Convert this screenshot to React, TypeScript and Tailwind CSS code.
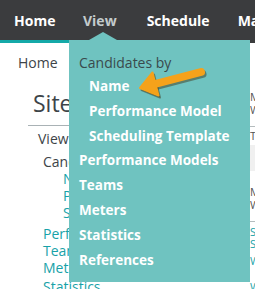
import React from "react";

const App = () => {
  return (
    <div className="relative w-[255px] h-[289px] overflow-hidden bg-white font-['Open_Sans',sans-serif]">
      {/* top nav */}
      <div className="h-[43px] bg-[#3b3c3e] flex items-start text-[14px] font-bold whitespace-nowrap">
        <div className="w-[69px] shrink-0 h-full flex flex-col">
          <div className="flex-1 flex items-center pl-[14px] text-white">Home</div>
          <div className="h-[3px] bg-[#14a9a8]" />
        </div>
        <div className="shrink-0 h-[40px] flex items-center pl-[14px] pr-[30px] text-[#c3cbcc]">View</div>
        <div className="shrink-0 h-[40px] flex items-center text-white pr-[28px]">Schedule</div>
        <div className="shrink-0 h-[40px] flex items-center text-white">Manage</div>
      </div>

      {/* page */}
      <div className="text-[#3d4448] whitespace-nowrap">
        <div className="pl-[18px] pt-[9px] text-[14px]">Home</div>
        <div className="flex">
          <div className="w-[69px] shrink-0 pl-[28px] pt-[15px]">
            <div className="text-[23px] leading-[30px] pl-[5px] pb-[7px]">Site</div>
            <div className="border-t border-[#a9b2b5] pt-[4px] pl-[10px] text-[14px] leading-[17px]">
              <div className="mb-[6px]">View</div>
              <div className="pl-[5px]">Candidates by</div>
              <div className="pl-[25px] text-[#17a2a8]">Name</div>
              <div className="pl-[25px] text-[#17a2a8]">Performance</div>
              <div className="pl-[25px] text-[#17a2a8]">Scheduling</div>
              <div className="pl-[5px] mt-[4px] text-[#17a2a8]">Performance</div>
              <div className="pl-[5px] text-[#17a2a8]">Teams</div>
              <div className="pl-[5px] text-[#17a2a8]">Meters</div>
              <div className="pl-[5px] mt-[2px] text-[#17a2a8]">Statistics</div>
            </div>
          </div>
        </div>
      </div>

      {/* right column peeking */}
      <div className="absolute left-[250px] top-[90px] w-[40px] text-[11px] leading-[13px] text-[#555] whitespace-nowrap">
        <div>Mon</div>
        <div>Wed</div>
        <div className="mt-[10px] border-t border-[#b5bcbe] pt-[2px]">Tue</div>
        <div className="mt-[3px] h-[26px] bg-[#f0f0f0]" />
        <div className="mt-[14px]">Mon</div>
        <div>Wed</div>
        <div className="mt-[10px] border-t border-[#b5bcbe] pt-[4px] text-[#17a2a8] leading-[12px]">
          <div>Sat</div>
          <div>Sun</div>
          <div className="mt-[5px]">Wed</div>
          <div className="mt-[14px]">Wed</div>
        </div>
      </div>

      {/* dropdown menu */}
      <div className="absolute left-[69px] top-[40px] w-[181px] h-[242px] bg-[#6fc3c0] pl-[10px] pt-[12px] whitespace-nowrap">
        <div className="absolute left-[20px] -top-[8px] w-0 h-0 border-l-[14px] border-r-[14px] border-b-[8px] border-l-transparent border-r-transparent border-b-[#6fc3c0]" />
        <div className="text-[14px] leading-[22px] text-[#3a4a4c]">Candidates by</div>
        <div className="pl-[10px] text-[13.5px] font-bold text-white leading-[24px]">
          <div>Name</div>
          <div className="pt-[1px]">Performance Model</div>
          <div className="pt-[1px]">Scheduling Template</div>
        </div>
        <div className="text-[13.5px] font-bold text-white leading-[25px]">
          <div>Performance Models</div>
          <div>Teams</div>
          <div>Meters</div>
          <div>Statistics</div>
          <div>References</div>
        </div>
      </div>

      {/* orange arrow */}
      <svg className="absolute left-[135px] top-[62px]" width="75" height="40" viewBox="0 0 75 40">
        <g transform="translate(1.5,2)" fill="#3a2a0a" fillOpacity="0.45" stroke="#3a2a0a" strokeOpacity="0.45">
          <path d="M66 10 L20 22" strokeWidth="8" strokeLinecap="round" fill="none" />
          <path d="M17.5 10.5 L5 26 L23.5 33.5 Z" strokeWidth="2" strokeLinejoin="round" />
        </g>
        <path d="M66 10 L20 22" stroke="#f5a21b" strokeWidth="8" strokeLinecap="round" fill="none" />
        <path d="M17.5 10.5 L5 26 L23.5 33.5 Z" fill="#f5a21b" stroke="#f5a21b" strokeWidth="2" strokeLinejoin="round" />
      </svg>
    </div>
  );
};

export default App;
